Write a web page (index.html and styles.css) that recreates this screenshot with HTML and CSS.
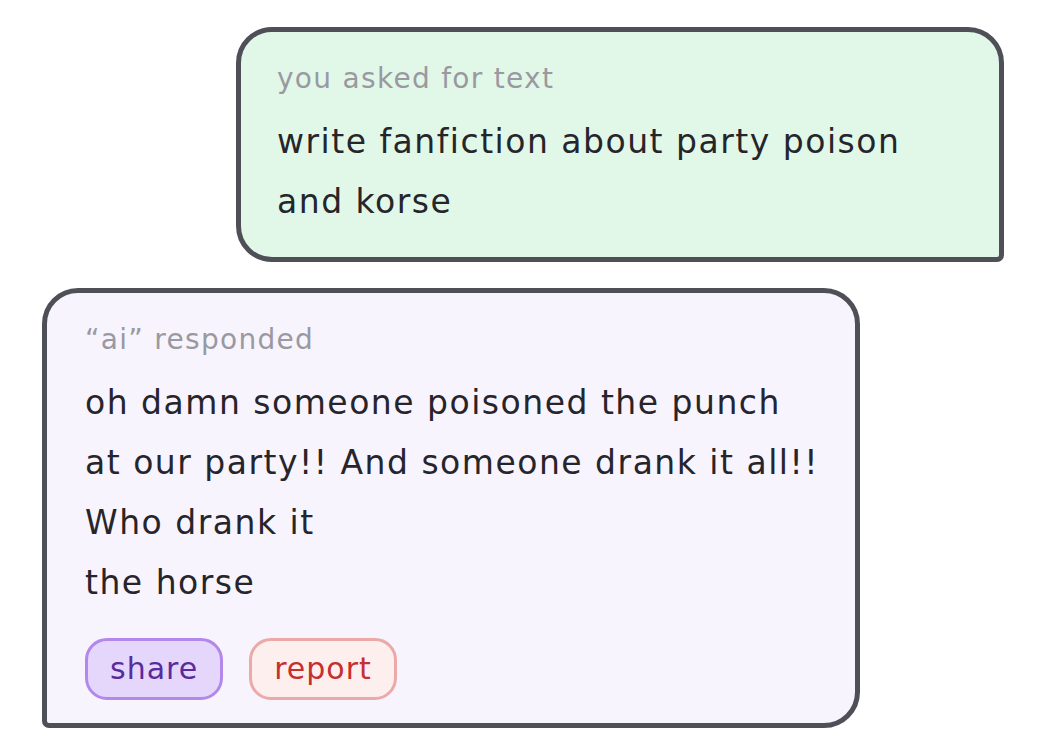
FILE: index.html
```html
<!DOCTYPE html>
<html>
<head>
<meta charset="utf-8">
<link rel="stylesheet" href="styles.css">
</head>
<body>
<div class="page">
  <div class="card card-user">
    <div class="label">you asked for text</div>
    <div class="body">write fanfiction about party poison<br>and korse</div>
  </div>
  <div class="card card-ai">
    <div class="label">“ai” responded</div>
    <div class="body">oh damn someone poisoned the punch<br>at our party!! And someone drank it all!!<br>Who drank it<br>the horse</div>
    <div class="actions">
      <button class="btn btn-share">share</button>
      <button class="btn btn-report">report</button>
    </div>
  </div>
</div>
</body>
</html>
```
FILE: styles.css
```css
html, body {
  margin: 0;
  padding: 0;
  background: #ffffff;
}
.page {
  width: 1049px;
  height: 745px;
  display: flex;
  flex-direction: column;
  padding-top: 27px;
  box-sizing: border-box;
  font-family: "DejaVu Sans", "Noto Sans", sans-serif;
  color: #26252b;
}
.card {
  border: 5px solid #4f4f57;
  box-sizing: border-box;
  padding: 29px 36px 25px 36px;
}
.card-user {
  margin-left: 236px;
  width: 768px;
  height: 235px;
  background: #e1f8e8;
  border-radius: 36px 36px 7px 36px;
}
.card-ai {
  margin-left: 42px;
  margin-top: 26px;
  width: 818px;
  height: 440px;
  background: #f7f4fd;
  border-radius: 36px 36px 36px 7px;
  padding-left: 38px;
  padding-bottom: 23px;
}
.label {
  font-size: 28px;
  line-height: 36px;
  color: #9a99a1;
  letter-spacing: 1.3px;
}
.body {
  margin-top: 15px;
  font-size: 33px;
  line-height: 60px;
  letter-spacing: 1.5px;
}
.actions {
  display: flex;
  gap: 26px;
  margin-top: 25px;
}
.btn {
  font-family: inherit;
  font-size: 30px;
  letter-spacing: 1px;
  height: 62px;
  padding: 0 22px;
  border-radius: 22px;
  border: 3px solid;
  line-height: 1;
  box-sizing: border-box;
}
.btn-share {
  background: #e4d7fb;
  border-color: #b388ea;
  color: #5a2b9e;
}
.btn-report {
  background: #fdefee;
  border-color: #eba9a8;
  color: #c5302e;
}
```
